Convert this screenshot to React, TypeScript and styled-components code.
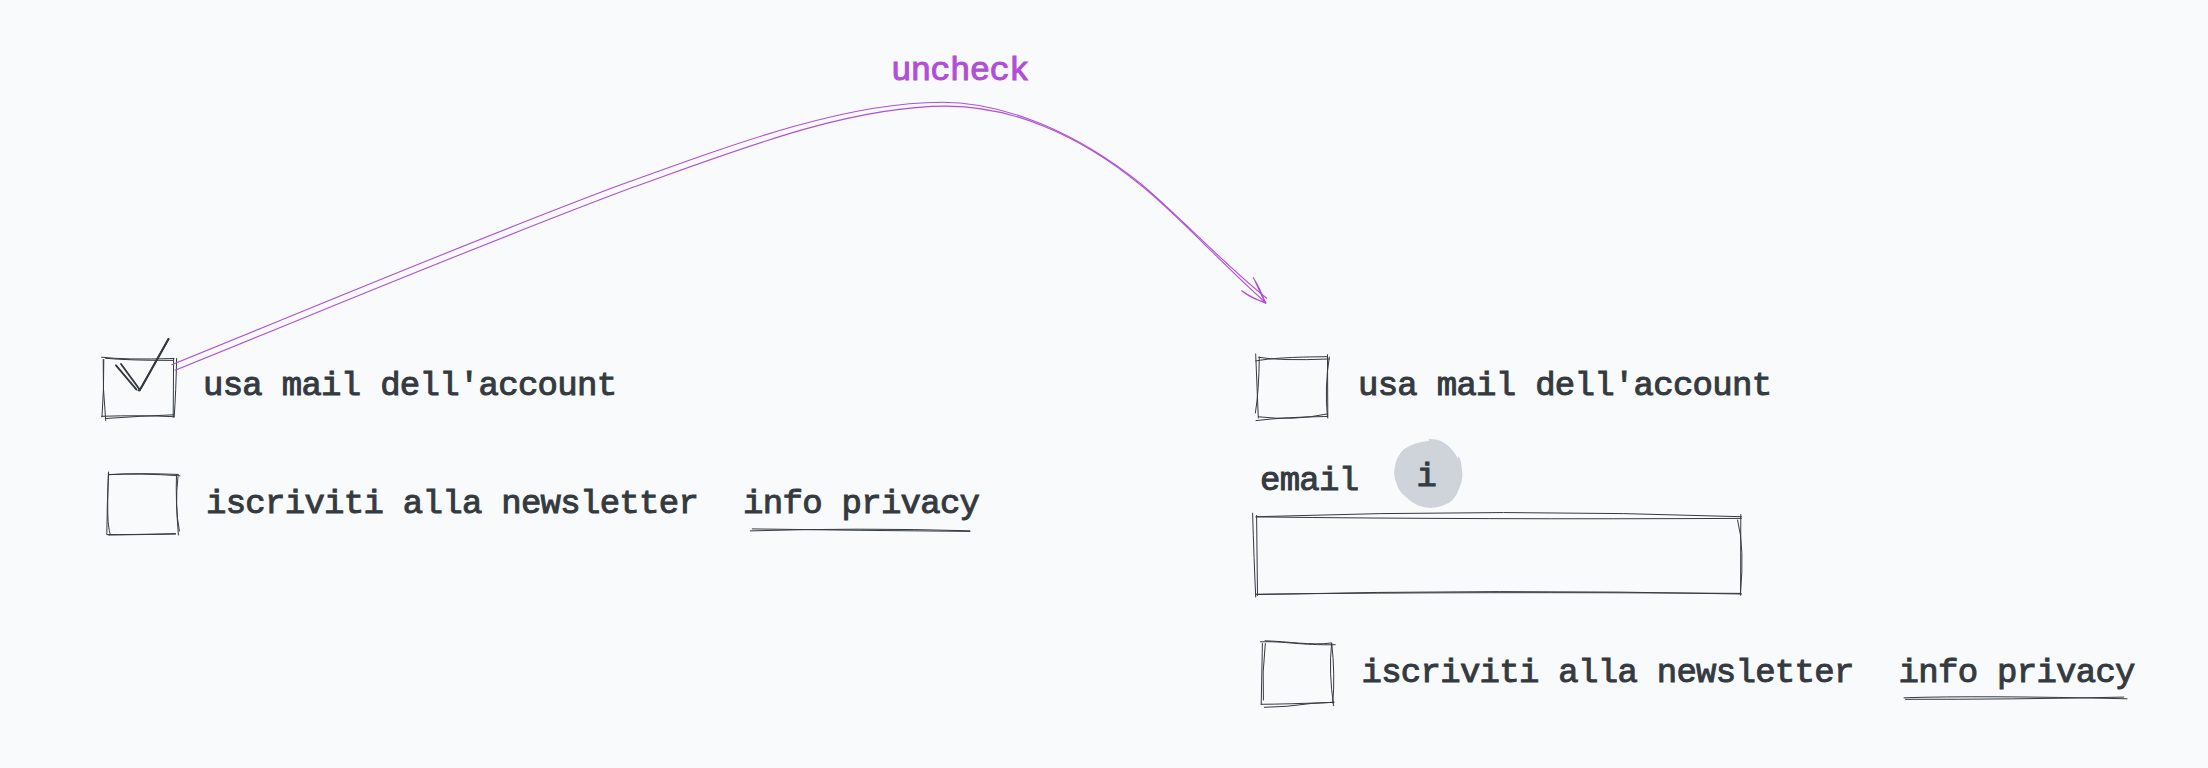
import React from 'react';
import styled, { createGlobalStyle } from 'styled-components';

const INK = '#343a40';
const GRAPE = '#b04fd6';

const GlobalStyle = createGlobalStyle`
  body {
    margin: 0;
    background: #f8fafc;
  }
`;

const Board = styled.main`
  position: relative;
  display: grid;
  grid-template-columns: 1248px 960px;
  grid-template-rows: 334px 434px;
  width: 2208px;
  height: 768px;
  overflow: hidden;
  background: #f8fafc;
`;

const Header = styled.header`
  grid-column: 1 / -1;
  padding: 51px 0 0 891px;
`;

const Panel = styled.section<{ $left: number; $top: number }>`
  display: flex;
  flex-direction: column;
  align-items: flex-start;
  padding: ${(p) => p.$top}px 0 0 ${(p) => p.$left}px;
`;

const Row = styled.div<{ $before?: number }>`
  display: flex;
  align-items: center;
  margin-top: ${(p) => p.$before ?? 0}px;
`;

const Label = styled.span<{ $color?: string; $left?: number }>`
  display: block;
  margin-left: ${(p) => p.$left ?? 0}px;
  font: 400 34px/40px 'Liberation Mono', monospace;
  letter-spacing: -0.72px;
  white-space: pre;
  color: ${(p) => p.$color ?? INK};
  -webkit-text-stroke: 1px ${(p) => p.$color ?? INK};
  stroke-linejoin: round;
`;

const Link = styled.a`
  display: flex;
  flex-direction: column;
  margin-left: 45px;
  padding-top: 12px;
`;

const EmailRow = styled.div`
  display: flex;
  align-items: flex-start;
  margin-top: 12px;
  height: 74px;
`;

const EmailLabel = styled(Label)`
  margin: 25px 0 0 12px;
`;

const Badge = styled.div`
  position: relative;
  width: 74px;
  height: 74px;
  margin-left: 34px;
`;

const BadgeLabel = styled(Label)`
  position: absolute;
  left: 24px;
  top: 21px;
`;

const Drawing = styled.svg`
  display: block;
  flex: none;
  fill: none;
  stroke: ${INK};
  stroke-width: 1;
  stroke-linecap: round;
`;

const ArrowLayer = styled(Drawing)`
  position: absolute;
  inset: 0;
  stroke: ${GRAPE};
  stroke-width: 1.1;
  pointer-events: none;
`;

type Box = [x: number, y: number, w: number, h: number];

function Sketch({ box, lines, bold = [] }: { box: Box; lines: string[]; bold?: string[] }) {
  return (
    <Drawing width={box[2]} height={box[3]} viewBox={box.join(' ')}>
      {lines.map((d) => (
        <path key={d} d={d} />
      ))}
      {bold.map((d) => (
        <path key={d} d={d} strokeWidth={1.9} />
      ))}
    </Drawing>
  );
}

const checkedBox = [
  'M101.5 357.2Q125 360 174 358.5',
  'M105.5 358.3Q130 360.5 173 360.4',
  'M173.6 358.3L173.2 417.3',
  'M176.6 358.5Q176 391 174.2 417',
  'M103.8 359.5Q104 390 102 416.8',
  'M103.2 359.5Q102.5 388 105.7 420.5',
  'M101.5 416.3Q140 415 174 416.7',
  'M106 418.5Q140 416 173.6 414.8',
];
const tick = ['M116 365.3L136.5 389.6', 'M121 364L140 390', 'M138.6 390.4L141 388.2L168.5 339', 'M139.6 390.4L168.5 339'];

const newsletterBox = [
  'M108.5 474.7Q140 473 180 475.8',
  'M108.5 474.6Q135 472.8 178.4 474.4',
  'M108.6 472Q107 505 106.8 534',
  'M108.4 473C107.6 500 106.8 525 110.3 534.5',
  'M176.5 474.5Q175.5 500 178.4 535',
  'M178 476.7Q174.5 506 179.4 531',
  'M107 534.6Q130 534.8 175.5 533.6',
  'M108.5 535L175.5 534.1',
];

const uncheckedBox = [
  'M1255.7 354L1258.3 418',
  'M1259.3 357Q1259 390 1255.4 413',
  'M1255.7 361Q1275 357 1327 356.7',
  'M1258.6 357.3Q1280 361 1329.3 359',
  'M1327.5 354.7L1327.8 418',
  'M1329.3 357Q1324.5 387 1327.4 417',
  'M1256 420.6Q1285 417 1327 416.5',
  'M1258.4 416.8Q1294 421 1327 414',
];

const secondNewsletterBox = [
  'M1260.5 641.8C1285 641 1300 645.4 1335.2 644.7',
  'M1265 640.8C1290 641.5 1310 645.6 1331.5 643',
  'M1262.4 643.5L1261.2 704.3',
  'M1265.3 643.5Q1262 672 1263.4 700',
  'M1261.2 704.3Q1285 704.2 1334 702.3',
  'M1264.4 707.3Q1286 707.2 1311 703.5L1333.8 702.3',
  'M1331.6 643.3Q1328.5 672 1333.6 705.7',
  'M1331.8 643.5Q1335.2 675 1332.8 703',
];

const emailField = [
  'M1252.6 513.2Q1254 560 1255.7 597',
  'M1256.6 515.5L1257.5 595.3',
  'M1256.4 516.7Q1508 508.4 1741.4 516.7',
  'M1255.8 516.9Q1480 519.6 1741.4 518.4',
  'M1740.8 514.5L1740.6 595.3',
  'M1737.6 520Q1744.8 548 1740.4 594',
  'M1255.7 594.6Q1500 588.9 1741.4 594',
  'M1256 594.2Q1480 591.6 1741 593.4',
];

const upperStroke =
  'M171.7 364.7C320 304.7 468 242.2 616 186.6C738 142.5 846 102.2 941.7 102.2C1005 102.2 1076.7 132.5 1141.7 184.5C1180 217 1225 265 1266.7 298.3';
const lowerStroke =
  'M175 370.3C328 308.5 481 244 634.3 186.8C741 148.6 850 106.1 946.7 106.1C1009 106.1 1077 132.5 1141 185.4C1178 215 1222 264 1265.7 302.7';

export default function App() {
  return (
    <>
      <GlobalStyle />
      <Board>
        <Header>
          <Label $color={GRAPE}>uncheck</Label>
        </Header>

        <Panel $left={96} $top={0}>
          <Row>
            <Sketch box={[96, 334, 90, 104]} lines={checkedBox} bold={tick} />
            <Label $left={17}>usa mail dell'account</Label>
          </Row>
          <Row $before={27}>
            <Sketch box={[96, 465, 90, 77]} lines={newsletterBox} />
            <Label $left={20}>iscriviti alla newsletter</Label>
            <Link>
              <Label>info privacy</Label>
              <Sketch
                box={[744, 523.5, 236, 12]}
                lines={['M753.3 528.4Q860 530 971 530.9', 'M751.3 530.4Q860 527 970.7 530.3']}
              />
            </Link>
          </Row>
        </Panel>

        <Panel $left={0} $top={14}>
          <Row>
            <Sketch box={[1248, 348, 90, 76]} lines={uncheckedBox} />
            <Label $left={20}>usa mail dell'account</Label>
          </Row>
          <EmailRow>
            <EmailLabel>email</EmailLabel>
            <Badge>
              <Drawing width={74} height={74} viewBox="1392 436 74 74">
                <path
                  fill="#ced4da"
                  stroke="none"
                  d="M1428.5 439Q1440 438 1448.5 446Q1455 452 1457.8 459L1458 456Q1461.5 460 1461.3 466Q1464.5 478 1459 489Q1454.5 502 1443 505.5Q1430 510.5 1417 505Q1410 501.5 1405.5 496.5Q1399 492 1396.8 484Q1393 476 1394.7 468Q1396 457 1403.5 449.5Q1413 442.5 1429 440.7Z"
                />
              </Drawing>
              <BadgeLabel>i</BadgeLabel>
            </Badge>
          </EmailRow>
          <Sketch box={[1248, 510, 500, 92]} lines={emailField} />
          <Row $before={34}>
            <Sketch box={[1248, 636, 90, 73]} lines={secondNewsletterBox} />
            <Label $left={23.5}>iscriviti alla newsletter</Label>
            <Link>
              <Label>info privacy</Label>
              <Sketch
                box={[1898.5, 692.5, 236, 12]}
                lines={['M1903.5 697.3Q1980 694.8 2126.5 698.3', 'M1905 698.8Q2010 699 2123.3 696.6']}
              />
            </Link>
          </Row>
        </Panel>

        <ArrowLayer width={2208} height={768} viewBox="0 0 2208 768">
          <path d={upperStroke} />
          <path d={lowerStroke} />
          <path d="M1253.3 277.7Q1260 288 1265.7 303.3M1253.8 278.5L1264.5 301.5" />
          <path d="M1241.7 290.8Q1252 298 1265.7 303.2M1242.5 291.5Q1254 300 1265.7 302.2" />
        </ArrowLayer>
      </Board>
    </>
  );
}
